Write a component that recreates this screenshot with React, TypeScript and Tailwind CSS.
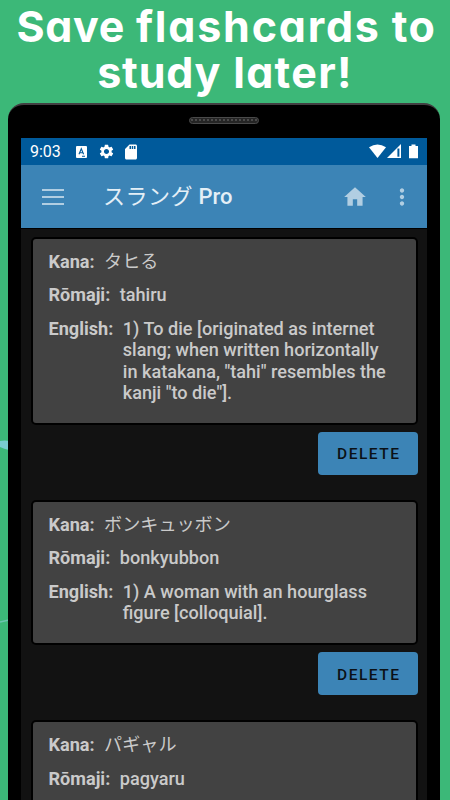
import { MdHome, MdMoreVert, MdSdCard, MdSettings } from 'react-icons/md';

type Flashcard = {
    kana: string;
    romaji: string;
    english?: string[];
};

const flashcards: Flashcard[] = [
    {
        kana: 'タヒる',
        romaji: 'tahiru',
        english: [
            '1) To die [originated as internet',
            'slang; when written horizontally',
            'in katakana, "tahi" resembles the',
            'kanji "to die"].',
        ],
    },
    {
        kana: 'ボンキュッボン',
        romaji: 'bonkyubbon',
        english: ['1) A woman with an hourglass', 'figure [colloquial].'],
    },
    {
        kana: 'パギャル',
        romaji: 'pagyaru',
    },
];

const Headline = () => (
    <h1 className="h-[103px] shrink-0 pt-[3px] text-[43px] leading-[46px] font-bold text-white font-['Inter',sans-serif] [font-feature-settings:'cv11'] whitespace-nowrap">
        <span className="flex justify-center gap-[11px] pl-[3px]">
            <span className="tracking-[0.6px]">Save</span>
            <span className="tracking-[1.8px]">flashcards</span>
            <span className="tracking-[1.5px]">to</span>
        </span>
        <span className="flex justify-center gap-[12px]">
            <span className="tracking-[0.8px]">study</span>
            <span className="tracking-[1.3px]">later!</span>
        </span>
    </h1>
);

const StatusBar = () => (
    <div className="flex h-[27px] items-center bg-[#005a9b] pl-[9px] pr-[8px] text-white">
        <span className="w-[46px] text-[16px]">9:03</span>
        <svg className="mr-[11px]" width="11" height="12" viewBox="0 0 11 12">
            <rect width="11" height="12" rx="1" fill="#fff" />
            <path d="M3 8.3 5.3 2.8 7.6 8.3M3.8 6.7h3M6 10.2h3" fill="none" stroke="#005a9b" strokeWidth="1.1" />
        </svg>
        <MdSettings className="mr-[7px] size-[17px]" />
        <MdSdCard className="size-[18px]" />
        <svg className="ml-auto" width="50" height="15" viewBox="0 0 50 15" fill="#fff">
            <path d="M0 3.3Q8.5-2.5 17 3.3L8.5 14Z" />
            <path d="M18 14 32 0v14Z" />
            <path d="M28.4 4.5h2v8.2h-2z" fill="#005a9b" />
            <path d="M40 2h2.5V.5h4V2H49v12.2h-9z" />
        </svg>
    </div>
);

const AppBar = () => (
    <div className="flex h-[63px] items-center bg-[#3c84b6] pl-[21px] pr-[12px]">
        <div className="mr-[39px] flex w-[22px] flex-col gap-[5px]">
            <span className="h-[2px] bg-[#b1cee2]" />
            <span className="h-[2px] bg-[#b1cee2]" />
            <span className="h-[2px] bg-[#b1cee2]" />
        </div>
        <span className="text-[22px] font-medium text-[#e4eff6]">
            <span className="font-normal tracking-[0.5px]">スラング</span> Pro
        </span>
        <MdHome className="ml-auto mr-[21px] size-[26px] text-[#b1cee2]" />
        <MdMoreVert className="size-[26px] text-[#b1cee2]" />
    </div>
);

const Card = ({ card }: { card: Flashcard }) => (
    <div className="mb-[25px] flex flex-col items-end">
        <div className="mb-[7px] w-full rounded-[5px] border-2 border-black bg-[#424242] px-[15.5px] pt-[12px] pb-[19.6px] text-[18.1px] leading-[21.4px] font-medium text-[#cacaca]">
            <div className="mb-[12px] flex gap-[9.5px]">
                <span className="font-bold">Kana:</span>
                <span className="font-normal">{card.kana}</span>
            </div>
            <div className="mb-[12px] flex gap-[9.5px]">
                <span className="font-bold">Rōmaji:</span>
                <span>{card.romaji}</span>
            </div>
            {card.english && (
                <div className="flex gap-[9.5px] whitespace-nowrap">
                    <span className="font-bold">English:</span>
                    <div>
                        {card.english.map((line) => (
                            <p key={line}>{line}</p>
                        ))}
                    </div>
                </div>
            )}
        </div>
        {card.english && (
            <button className="h-[43px] w-[100px] rounded-[4px] bg-[#3c84b6] pt-[3px] pl-[1.5px] text-[15.5px] font-medium tracking-[1.5px] text-[#0b1116]">
                DELETE
            </button>
        )}
    </div>
);

const App = () => (
    <div className="relative flex h-[800px] w-[450px] flex-col overflow-hidden bg-[#3cb878]">
        {/* Background brush strokes */}
        <svg className="absolute left-0 top-[440px]" width="9" height="190" viewBox="0 0 9 190">
            <path d="M0 1Q5 0 9 1V10Q4 9 0 7Z" fill="#78cbd0" />
            <path d="M0 182 9 180" stroke="#6cc5b0" strokeWidth="1.5" />
        </svg>
        <Headline />
        <div className="relative ml-[8px] flex h-[720px] w-[432px] shrink-0 flex-col rounded-t-[16px] border-t-2 border-[#423f42] bg-black px-[13px] font-['Roboto','Noto_Sans_CJK_JP',sans-serif]">
            <div className="flex h-[33px] shrink-0 justify-center pt-[12px]">
                <div className="h-[7px] w-[70px] rounded-full border border-[#4a4a4a] bg-[#252525] p-px">
                    <div className="h-full border-t-2 border-dotted border-[#4a4a4a]" />
                </div>
            </div>
            <div className="flex-1 bg-[#121212]">
                <StatusBar />
                <AppBar />
                <div className="border-t border-black pt-[8px] pl-[10px] pr-[9px]">
                    {flashcards.map((card) => (
                        <Card key={card.romaji} card={card} />
                    ))}
                </div>
            </div>
        </div>
    </div>
);

export default App;
